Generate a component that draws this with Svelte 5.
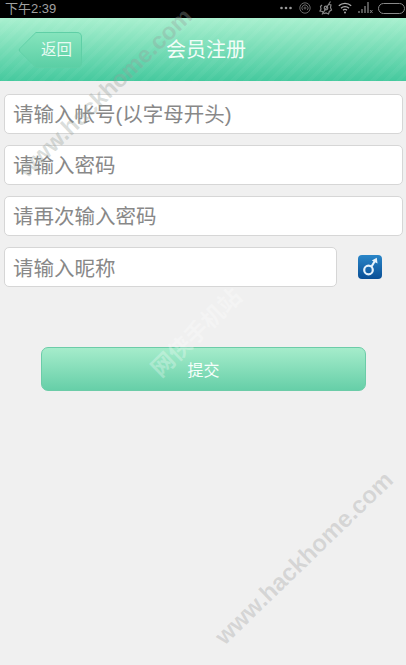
<script>
  const fields = ['请输入帐号(以字母开头)', '请输入密码', '请再次输入密码'];
</script>

<div class="page">
  <div class="status">
    <span class="time">下午2:39</span>
    <div class="sysicons">
      <svg width="12" height="4" viewBox="0 0 12 4" fill="#999"><circle cx="1.500" cy="2" r="1.300"/><circle cx="6" cy="2" r="1.300"/><circle cx="10.500" cy="2" r="1.300"/></svg>
      <svg class="alarm" width="12" height="12" viewBox="0 0 12 12" fill="none" stroke="#666" stroke-width="1"><circle cx="6" cy="6" r="5.200"/><path d="M3.800 8.200a3.100 3.100 0 1 1 4.400 0"/><circle cx="6" cy="6" r="1"/></svg>
      <svg class="gear" width="14" height="14" viewBox="0 0 14 14" fill="none" stroke="#888" stroke-width="1.200"><path d="M3 4 1.500 5.500 2 8l-1 2 2.500.5L5 12.500l2-.5 2.500 1 .8-2.500 2.200-1.500-1-2.500.5-2.500L10 3.500"/><circle cx="7" cy="7" r="1.800"/><path d="M11.500.5 3 13.500"/></svg>
      <svg class="wifi" width="14" height="12" viewBox="0 0 14 12" fill="none" stroke="#aaa" stroke-width="1.300"><path d="M.8 3.800a9 9 0 0 1 12.400 0M3 6.200a5.800 5.800 0 0 1 8 0M5 8.300a2.800 2.800 0 0 1 4 0"/><circle cx="7" cy="10.500" r="1" fill="#aaa" stroke="none"/></svg>
      <svg class="signal" width="15" height="12" viewBox="0 0 15 12" fill="#555"><rect x="0" y="9" width="2" height="2"/><rect x="3" y="7" width="2" height="4"/><rect x="6" y="4" width="2" height="7"/><rect x="9" y="0" width="2" height="11"/><path d="M12 8l2.500 3M14.500 8 12 11" stroke="#888" stroke-width="0.900"/></svg>
      <span class="battery"></span>
    </div>
  </div>

  <header class="bar">
    <button class="back"><span class="tip"></span><span class="back-label">返回</span></button>
    <h1>会员注册</h1>
  </header>

  <main class="form">
    {#each fields as f}
      <div class="field">{f}</div>
    {/each}
    <div class="row">
      <div class="field grow">请输入昵称</div>
      <div class="gender">
        <svg width="17" height="20" viewBox="0 0 17 20" fill="none" stroke="#e6f2fb" stroke-width="2.200"><circle cx="6.500" cy="13" r="4.300"/><path d="M9.500 9.500 13.500 3"/><path d="M14.800 .8 15.500 6.500 9.800 3.500z" fill="#e6f2fb" stroke="none"/></svg>
      </div>
    </div>
    <button class="submit">提交</button>
  </main>

  <div class="mark m1">www.hackhome.com</div>
  <div class="mark m2">网侠手机站</div>
  <div class="mark m3">www.hackhome.com</div>
</div>

<style>
  :global(body) { margin: 0; }
  .page {
    position: relative;
    width: 406px;
    height: 665px;
    overflow: hidden;
    background: #f0f0f0;
    font-family: "Liberation Sans", "Noto Sans CJK SC", sans-serif;
  }
  .status {
    height: 18px;
    background: #000;
    display: flex;
    align-items: center;
    justify-content: space-between;
    padding: 0 1px 0 5px;
    color: #a0a0a0;
    font-size: 13px;
  }
  .time { line-height: 15px; margin-top: -2px; }
  .sysicons { display: flex; align-items: center; margin-top: -2px; }
  .alarm { margin-left: 7px; }
  .gear { margin-left: 8px; }
  .wifi { margin-left: 5px; }
  .signal { margin-left: 6px; }
  .battery {
    box-sizing: border-box;
    width: 27px;
    height: 11px;
    border: 1px solid #888;
    border-radius: 6px;
    margin-left: 5px;
  }
  .bar {
    height: 63px;
    display: flex;
    align-items: center;
    position: relative;
    background:
      repeating-linear-gradient(135deg, rgba(255,255,255,0.035) 0 4px, rgba(255,255,255,0) 4px 9px),
      linear-gradient(#a9f0cf, #45c99e);
  }
  .back {
    position: relative;
    flex: none;
    margin-left: 18px;
    width: 64px;
    height: 36px;
    padding: 0;
    border: 0;
    background: none;
    font-family: inherit;
  }
  .back-label {
    position: absolute;
    inset: 0 0 0 18px;
    box-sizing: border-box;
    border: 1px solid #5fcfa6;
    border-left: 0;
    border-radius: 0 5px 5px 0;
    background: linear-gradient(#86e4bd, #5bcfa5);
    color: #e8fbf3;
    font-size: 15.500px;
    line-height: 34px;
    text-align: left;
    padding-left: 5px;
  }
  .tip {
    position: absolute;
    left: 5px;
    top: 5px;
    box-sizing: border-box;
    width: 26px;
    height: 26px;
    transform: rotate(45deg);
    border-left: 1px solid #5fcfa6;
    border-bottom: 1px solid #5fcfa6;
    background: linear-gradient(135deg, #86e4bd, #5bcfa5);
    border-radius: 0 0 0 3px;
  }
  h1 {
    margin: 0 0 0 84px;
    color: #f2fdf8;
    font-size: 20px;
    line-height: 26px;
    font-weight: 400;
  }
  .form {
    padding: 13px 3px 0 4px;
    display: flex;
    flex-direction: column;
    gap: 11px;
  }
  .field {
    box-sizing: border-box;
    height: 40px;
    background: #fff;
    border: 1px solid #d6d6d6;
    border-radius: 5px;
    color: #888;
    font-size: 20.500px;
    line-height: 39px;
    padding-left: 8px;
    white-space: nowrap;
  }
  .row { display: flex; align-items: center; }
  .grow { width: 333px; flex: none; line-height: 41px; }
  .gender {
    width: 24px;
    height: 24px;
    margin-left: 21px;
    border-radius: 4px;
    background: linear-gradient(#2a86c8, #0a4f96);
    display: flex;
    align-items: center;
    justify-content: center;
  }
  .submit {
    box-sizing: border-box;
    align-self: flex-start;
    width: 325px;
    height: 44px;
    margin: 49px 0 0 37px;
    border: 1px solid #6ccca8;
    border-radius: 7px;
    background: linear-gradient(#a5eccb, #66cfa8);
    color: #f6fffb;
    font: inherit;
    font-size: 16px;
    padding: 0;
  }
  .mark {
    position: absolute;
    font-weight: 700;
    font-size: 24px;
    white-space: nowrap;
    transform: translate(-50%, -50%) rotate(-44deg);
  }
  .m1 { left: 105px; top: 93px; font-size: 23.500px; color: rgba(150,160,155,0.36); }
  .m2 { left: 195px; top: 331px; font-size: 23px; color: rgba(255,255,255,0.28); }
  .m3 { left: 304px; top: 558px; color: rgba(120,120,120,0.22); }
</style>
